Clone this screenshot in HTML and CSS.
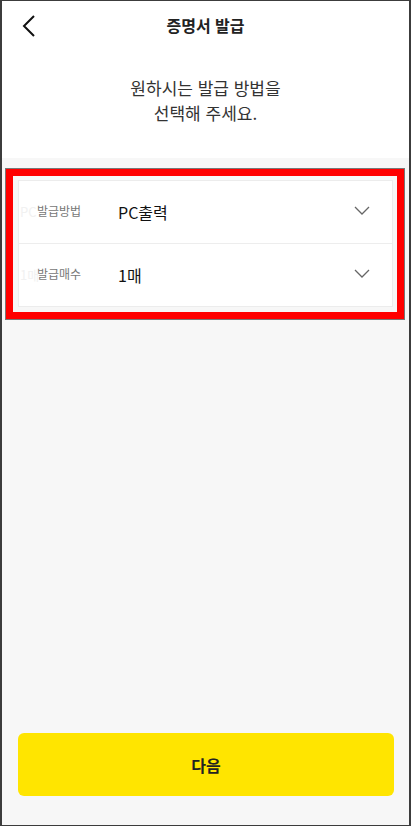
FILE: index.html
```html
<!DOCTYPE html>
<html lang="ko">
<head>
    <meta charset="UTF-8">
    <meta name="viewport" content="width=device-width, initial-scale=1.0">
    <title>증명서 발급</title>
    <link rel="stylesheet" href="styles.css">
</head>
<body>
    <div class="screen">
        <div class="top">
            <div class="header">
                <a href="#" class="back" title="뒤로">
                    <svg width="14" height="24" viewBox="0 0 14 24">
                        <path d="M12 2 L2 12 L12 22" fill="none" stroke="#111" stroke-width="2"/>
                    </svg>
                </a>
                <h1>증명서 발급</h1>
            </div>
            <p class="guide">원하시는 발급 방법을<br>선택해 주세요.</p>
        </div>

        <div class="highlight">
            <div class="card">
                <div class="row">
                    <span class="ghost">PC</span>
                    <span class="label">발급방법</span>
                    <span class="value">PC출력</span>
                    <svg class="arrow" width="16" height="9" viewBox="0 0 16 9">
                        <path d="M1 1 L8 8 L15 1" fill="none" stroke="#666" stroke-width="1.3"/>
                    </svg>
                </div>
                <div class="row">
                    <span class="ghost">1매</span>
                    <span class="label">발급매수</span>
                    <span class="value">1매</span>
                    <svg class="arrow" width="16" height="9" viewBox="0 0 16 9">
                        <path d="M1 1 L8 8 L15 1" fill="none" stroke="#666" stroke-width="1.3"/>
                    </svg>
                </div>
            </div>
        </div>

        <button type="button" class="next">다음</button>
    </div>
</body>
</html>
```

FILE: styles.css
```css
body {
    margin: 0;
    padding: 0;
    font-family: "Noto Sans CJK KR", "Noto Sans", sans-serif;
    background-color: #f7f7f7;
}

.screen {
    box-sizing: border-box;
    width: 411px;
    height: 826px;
    border: 1px solid #3c3c3c;
    border-left-width: 2px;
    border-right-width: 2px;
    background-color: #f7f7f7;
    display: flex;
    flex-direction: column;
}

.top {
    background-color: #fff;
    height: 157px;
}

.header {
    position: relative;
    height: 48px;
    display: flex;
    align-items: center;
    justify-content: center;
}

.header h1 {
    margin: 0;
    font-size: 16px;
    font-weight: bold;
    color: #222;
}

.back {
    position: absolute;
    left: 20px;
    top: 13px;
    display: flex;
}

.guide {
    margin: 26px 0 0;
    text-align: center;
    font-size: 17px;
    line-height: 25px;
    color: #333;
}

.highlight {
    margin: 10px 4px 0 3px;
    border: 1px solid #777;
    outline: 7px solid #ff0000;
    outline-offset: -8px;
    padding: 11px 11px 12px 12px;
}

.card {
    position: relative;
    background-color: #fff;
    border: 1px solid #ececec;
}

.row {
    position: relative;
    height: 62px;
    display: flex;
    align-items: center;
    padding: 0 22px 0 18px;
}

.row + .row {
    border-top: 1px solid #ededed;
}

.ghost {
    position: absolute;
    left: 1px;
    top: 21px;
    font-size: 13px;
    color: #f1f1f1;
}

.label {
    width: 81px;
    font-size: 12px;
    color: #777;
    margin-top: -4px;
}

.value {
    flex: 1;
    font-size: 16px;
    color: #111;
}

.arrow {
    margin-top: -4px;
}

.next {
    margin: auto 15px 29px 16px;
    height: 63px;
    border: none;
    border-radius: 6px;
    background-color: #ffe500;
    font-family: "Noto Sans CJK KR", "Noto Sans", sans-serif;
    font-size: 16px;
    font-weight: bold;
    color: #222;
    cursor: pointer;
}
```
